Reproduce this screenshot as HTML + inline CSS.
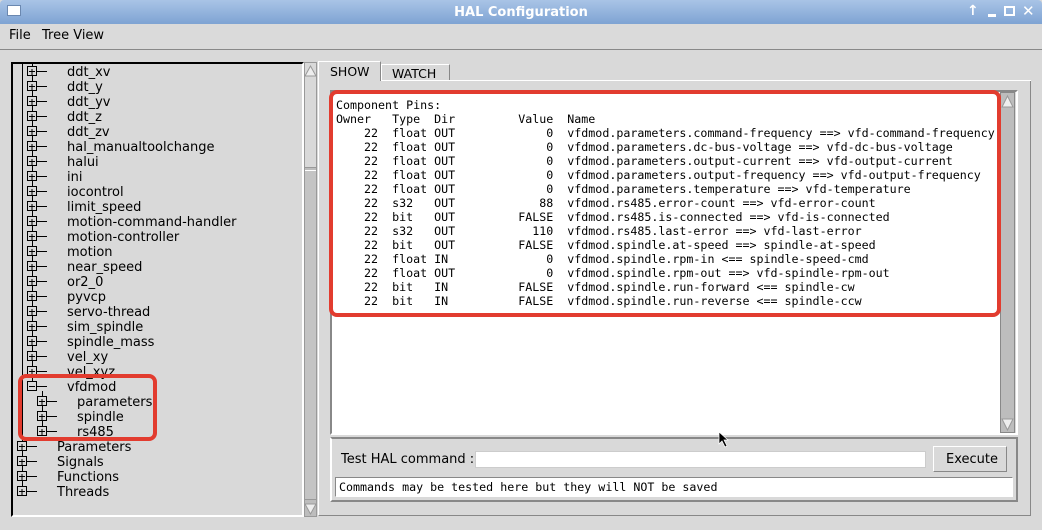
<!DOCTYPE html>
<html><head><meta charset="utf-8"><style>
*{margin:0;padding:0;box-sizing:border-box}
body{width:1042px;height:530px;overflow:hidden;background:#d9d9d9;font-family:"DejaVu Sans","Liberation Sans",sans-serif;font-size:13px;color:#000;position:relative}
.a{position:absolute}
#title{left:0;top:0;width:1042px;height:24px;background:linear-gradient(#a9c4e6,#7ea3d3);border-radius:4px 4px 0 0}
#title .t{left:0;width:1042px;text-align:center;top:5px;color:#fff;font-weight:bold;font-size:13px}
#menu{top:24px;left:0;width:1042px;height:26px;border-bottom:1px solid #888;background:#dadada}
.sunk{border-top:1px solid #888;border-left:1px solid #888;border-bottom:1px solid #fff;border-right:1px solid #fff}
.rais{border-top:1px solid #fff;border-left:1px solid #fff;border-bottom:1px solid #888;border-right:1px solid #888}
pre{font-family:"DejaVu Sans Mono","Liberation Mono",monospace;font-size:11.65px;line-height:14px}
.red{border:4px solid #e23c2f;border-radius:8px}
</style></head><body>
<div id="title" class="a">
 <div class="a" style="left:7px;top:5px;width:14px;height:11px;background:#fff;border:1px solid #6b88b0"></div>
 <div class="a t">HAL Configuration</div>
 <div class="a" style="left:967px;top:3px;color:#fff;font-size:14px;font-weight:bold">↑</div>
 <div class="a" style="left:988px;top:14px;width:8px;height:3px;background:#fff"></div>
 <div class="a" style="left:1004px;top:6px;width:11px;height:10px;border:2px solid #fff"></div>
 <div class="a" style="left:1022px;top:2px;color:#fff;font-size:15px;font-weight:bold">✕</div>
</div>
<div id="menu" class="a"><span class="a" style="left:9px;top:4px">File</span><span class="a" style="left:42px;top:4px">Tree View</span></div>

<!-- left panel -->
<div class="a" style="left:11px;top:62px;width:293px;height:455px;border:2px solid #000;border-right-color:#fff;border-bottom-color:#fff;background:#d9d9d9"></div>
<div class="a" style="left:304px;top:62px;width:13px;height:455px;background:#bdbdbd;border:1px solid #999"></div>
<div class="a" style="left:305px;top:63px;width:11px;height:105px;background:#d9d9d9;border-bottom:1px solid #999"></div>
<div class="a" style="left:305px;top:170px;width:11px;height:330px;border-top:1px solid #fff;border-bottom:1px solid #999;background:#c4c4c4"></div>
<svg class="a" style="left:0;top:0" width="320" height="530">
<defs><clipPath id="c"><rect x="13" y="64" width="289" height="451"/></clipPath></defs>
<g clip-path="url(#c)" font-family="DejaVu Sans, Liberation Sans, sans-serif" font-size="13" stroke-width="1">
<g stroke="#000" fill="none">
<line x1="22.5" y1="60" x2="22.5" y2="491"/>
<line x1="32.5" y1="60" x2="32.5" y2="386"/>
<line x1="42.5" y1="391" x2="42.5" y2="431"/>
</g>
<g id="items"></g>
</g>
<polygon points="305,76 316,76 310.5,66" fill="#eee" stroke="#999"/>
<polygon points="305,504 316,504 310.5,514" fill="#eee" stroke="#999"/>
</svg>

<!-- tabs -->
<div class="a rais" style="left:318px;top:61px;width:63px;height:20px;background:#d9d9d9;border-bottom:none"><span class="a" style="left:11px;top:2px;font-size:12.5px">SHOW</span></div>
<div class="a rais" style="left:381px;top:64px;width:69px;height:17px;background:#d9d9d9"><span class="a" style="left:10px;top:1px;font-size:12.5px">WATCH</span></div>
<div class="a rais" style="left:318px;top:80px;width:713px;height:436px;border-top:none"></div>
<div class="a" style="left:381px;top:80px;width:650px;height:1px;background:#fff"></div>
<!-- text area -->
<div class="a" style="left:330px;top:90px;width:688px;height:345px;border:2px solid #888;border-right-color:#fff;border-bottom-color:#fff"></div>
<div class="a" style="left:332px;top:92px;width:668px;height:341px;background:#fff"></div>
<div class="a" style="left:1000px;top:92px;width:15px;height:341px;background:#bdbdbd;border:1px solid #888"></div>
<svg class="a" style="left:1000px;top:92px" width="15" height="341"><polygon points="2,15 13,15 7.5,4" fill="#eee" stroke="#999"/><polygon points="2,327 13,327 7.5,338" fill="#eee" stroke="#999"/></svg>
<pre class="a" style="left:336px;top:98px">Component Pins:
Owner   Type  Dir         Value  Name
    22  float OUT             0  vfdmod.parameters.command-frequency ==> vfd-command-frequency
    22  float OUT             0  vfdmod.parameters.dc-bus-voltage ==> vfd-dc-bus-voltage
    22  float OUT             0  vfdmod.parameters.output-current ==> vfd-output-current
    22  float OUT             0  vfdmod.parameters.output-frequency ==> vfd-output-frequency
    22  float OUT             0  vfdmod.parameters.temperature ==> vfd-temperature
    22  s32   OUT            88  vfdmod.rs485.error-count ==> vfd-error-count
    22  bit   OUT         FALSE  vfdmod.rs485.is-connected ==> vfd-is-connected
    22  s32   OUT           110  vfdmod.rs485.last-error ==> vfd-last-error
    22  bit   OUT         FALSE  vfdmod.spindle.at-speed ==> spindle-at-speed
    22  float IN              0  vfdmod.spindle.rpm-in &lt;== spindle-speed-cmd
    22  float OUT             0  vfdmod.spindle.rpm-out ==> vfd-spindle-rpm-out
    22  bit   IN          FALSE  vfdmod.spindle.run-forward &lt;== spindle-cw
    22  bit   IN          FALSE  vfdmod.spindle.run-reverse &lt;== spindle-ccw</pre>
<div class="a red" style="left:329px;top:90px;width:672px;height:227px"></div>

<!-- bottom -->
<div class="a" style="left:330px;top:437px;width:688px;height:65px;border:2px solid #888;border-left-color:#fff"></div>
<span class="a" style="left:341px;top:452px">Test HAL command :</span>
<div class="a" style="left:475px;top:451px;width:451px;height:17px;background:#fff;border:1px solid #ccc"></div>
<div class="a rais" style="left:933px;top:446px;width:74px;height:26px"><span class="a" style="left:12px;top:5px">Execute</span></div>
<div class="a sunk" style="left:335px;top:477px;width:678px;height:20px;background:#fff"><pre class="a" style="left:3px;top:2px">Commands may be tested here but they will NOT be saved</pre></div>
<div class="a red" style="left:18px;top:374px;width:139px;height:67px"></div>
<svg class="a" style="left:718px;top:431px" width="14" height="18"><path d="M1 1 L1 13 L4 10 L7 16 L9 15 L6 9 L10 9 Z" fill="#000" stroke="#fff" stroke-width="0.7"/></svg>
<script>
var items=[["ddt_xv",1],["ddt_y",1],["ddt_yv",1],["ddt_z",1],["ddt_zv",1],["hal_manualtoolchange",1],["halui",1],["ini",1],["iocontrol",1],["limit_speed",1],["motion-command-handler",1],["motion-controller",1],["motion",1],["near_speed",1],["or2_0",1],["pyvcp",1],["servo-thread",1],["sim_spindle",1],["spindle_mass",1],["vel_xy",1],["vel_xyz",1],["vfdmod",1,1],["parameters",2],["spindle",2],["rs485",2],["Parameters",0],["Signals",0],["Functions",0],["Threads",0]];
var s="";items.forEach(function(it,i){var y=71+i*15;var bx=[17,27,37][it[1]],tx=[57,67,77][it[1]];
s+='<rect x="'+(bx+0.5)+'" y="'+(y-4.5)+'" width="9" height="9" fill="#d9d9d9" stroke="#000"/>';
s+='<line x1="'+(bx+2)+'" y1="'+(y+0.5)+'" x2="'+(bx+8)+'" y2="'+(y+0.5)+'" stroke="#000"/>';
if(!it[2])s+='<line x1="'+(bx+5)+'" y1="'+(y-2)+'" x2="'+(bx+5)+'" y2="'+(y+4)+'" stroke="#000"/>';
s+='<line x1="'+(bx+10)+'" y1="'+(y+0.5)+'" x2="'+(bx+20)+'" y2="'+(y+0.5)+'" stroke="#000"/>';
s+='<text x="'+tx+'" y="'+(y+5)+'" fill="#000">'+it[0]+'</text>';});
document.getElementById("items").innerHTML=s;
</script>
</body></html>
